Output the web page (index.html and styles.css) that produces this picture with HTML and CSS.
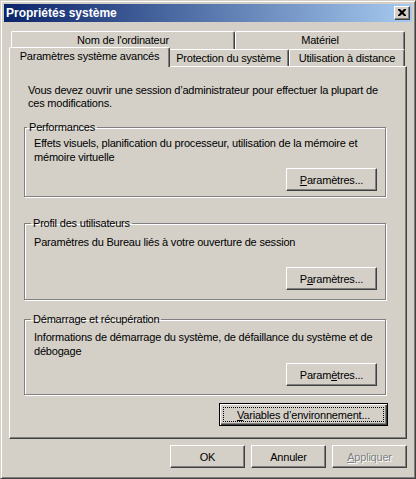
FILE: index.html
```html
<!DOCTYPE html>
<html lang="fr">
<head>
<meta charset="utf-8">
<title>Propriétés système</title>
<link rel="stylesheet" href="styles.css">
</head>
<body>
<div class="window">
  <div class="titlebar">
    <span class="title">Propriétés système</span>
    <span class="close-btn"><svg width="8" height="7" viewBox="0 0 8 7"><path d="M0 0h2l2 2 2-2h2v1L5.5 3.5 8 6v1H6L4 5 2 7H0V6l2.5-2.5L0 1z" fill="#000"/></svg></span>
  </div>
  <div class="client">
    <div class="tabs">
      <div class="tabrow tabrow-back">
        <div class="tab tab-nom">Nom de l'ordinateur</div>
        <div class="tab tab-mat">Matériel</div>
      </div>
      <div class="tabrow tabrow-front">
        <div class="tab tab-avc tab-selected">Paramètres système avancés</div>
        <div class="tab tab-prot">Protection du système</div>
        <div class="tab tab-util">Utilisation à distance</div>
      </div>
    </div>
    <div class="panel">
      <p class="intro">Vous devez ouvrir une session d’administrateur pour effectuer la plupart de<br>ces modifications.</p>

      <fieldset class="gb gb-perf">
        <legend>Performances</legend>
        <div class="gb-body">
          <p class="gb-text">Effets visuels, planification du processeur, utilisation de la mémoire et<br>mémoire virtuelle</p>
          <button class="btn btn-wide"><u>P</u>aramètres...</button>
        </div>
      </fieldset>

      <fieldset class="gb gb-prof">
        <legend>Profil des utilisateurs</legend>
        <div class="gb-body">
          <p class="gb-text">Paramètres du Bureau liés à votre ouverture de session</p>
          <button class="btn btn-wide">P<u>a</u>ramètres...</button>
        </div>
      </fieldset>

      <fieldset class="gb gb-dem">
        <legend>Démarrage et récupération</legend>
        <div class="gb-body">
          <p class="gb-text">Informations de démarrage du système, de défaillance du système et de<br>débogage</p>
          <button class="btn btn-wide">Param<u>è</u>tres...</button>
        </div>
      </fieldset>

      <div class="env-row">
        <button class="btn btn-default btn-env"><span class="focus-rect"></span><u>V</u>ariables d’environnement...</button>
      </div>
    </div>
    <div class="dlg-buttons">
      <button class="btn">OK</button>
      <button class="btn">Annuler</button>
      <button class="btn btn-disabled"><u>A</u>ppliquer</button>
    </div>
  </div>
</div>
</body>
</html>
```
FILE: styles.css
```css
* { box-sizing: border-box; }
html, body { margin: 0; padding: 0; }
body {
  background: #D4D0C8;
  font-family: "Liberation Sans", Arial, sans-serif;
  font-size: 11px;
  letter-spacing: -0.2px;
  color: #000;
}
.window {
  width: 416px;
  height: 479px;
  background: #D4D0C8;
  border: 1px solid;
  border-color: #D4D0C8 #404040 #404040 #D4D0C8;
  box-shadow: inset 1px 1px 0 #fff, inset -1px -1px 0 #808080;
  padding: 3px;
}
.titlebar {
  height: 18px;
  background: linear-gradient(to right, #0A246A, #A6CAF0);
  display: flex;
  align-items: center;
  justify-content: space-between;
  padding: 0 2px 0 2px;
}
.title {
  color: #fff;
  font-weight: bold;
  font-size: 12px;
  letter-spacing: 0;
  line-height: 14px;
}
.close-btn {
  width: 16px;
  height: 14px;
  background: #D4D0C8;
  border: 1px solid;
  border-color: #fff #404040 #404040 #fff;
  box-shadow: inset -1px -1px 0 #808080;
  display: flex;
  align-items: center;
  justify-content: center;
  padding: 0 1px 1px 0;
}
.close-btn svg { display: block; }

.client { padding: 0 5px 0 5px; }

.tabs { margin-top: 9px; width: 398px; position: relative; z-index: 1; }
.tabrow { display: flex; padding: 0 1px 0 2px; }
.tabrow-back { height: 18px; }
.tabrow-front { height: 17px; }
.tab {
  background: #D4D0C8;
  border-top: 1px solid #fff;
  border-left: 1px solid #fff;
  border-right: 1px solid #404040;
  box-shadow: inset -1px 0 0 #808080;
  border-radius: 2px 2px 0 0;
  text-align: center;
  line-height: 16px;
  white-space: nowrap;
  height: 100%;
}
.tabrow-back .tab { height: 19px; line-height: 17px; }
.tab-nom { width: 224px; }
.tab-mat { width: 170px; }
.tab-avc { width: 157px; }
.tab-prot { width: 121px; }
.tab-util { width: 116px; }
.tab-selected {
  position: relative;
  z-index: 2;
  margin: -2px -2px 0 -2px;
  width: 161px;
  height: 20px;
  line-height: 17px;
}
.tabrow-front .tab:not(.tab-selected) { padding-top: 1px; line-height: 15px; }

.panel {
  width: 398px;
  height: 373px;
  border: 1px solid;
  border-color: #fff #404040 #404040 #fff;
  box-shadow: inset -1px -1px 0 #808080;
  padding: 17px 0 0 14px;
}
.intro {
  margin: 0 0 0 4px;
  line-height: 13px;
}
.gb {
  margin: 0;
  padding: 0;
  width: 362px;
  border: 1px solid #808080;
  box-shadow: inset 1px 1px 0 #fff, 1px 1px 0 #fff;
  min-width: 0;
}
.gb legend {
  padding: 0 2px;
  line-height: 13px;
  margin-left: 6px;
}
.gb-perf legend { margin-left: 2px; }
.gb-body {
  display: flex;
  flex-direction: column;
  align-items: flex-start;
  padding: 1px 8px 5px 9px;
}
.gb-text { margin: 0; line-height: 14px; white-space: nowrap; }
.gb .btn-wide { margin-top: auto; align-self: flex-end; }

.gb-perf { margin-top: 11px; }
.gb-perf .gb-body { height: 62px; padding-top: 2px; }
.gb-prof { margin-top: 20px; }
.gb-prof .gb-body { height: 69px; padding-top: 5px; padding-bottom: 9px; }
.gb-dem { margin-top: 13px; }
.gb-dem .gb-body { height: 68px; padding-top: 4px; padding-bottom: 8px; }

.btn {
  width: 75px;
  height: 23px;
  padding: 0;
  font-family: "Liberation Sans", Arial, sans-serif;
  font-size: 11px;
  letter-spacing: -0.2px;
  color: #000;
  background: #D4D0C8;
  border: 1px solid;
  border-color: #fff #404040 #404040 #fff;
  box-shadow: inset -1px -1px 0 #808080;
  border-radius: 0;
  line-height: 20px;
  text-align: center;
}
.btn-wide { width: 91px; }
.btn-default {
  position: relative;
  border: 1px solid #000;
  box-shadow: inset 1px 1px 0 #fff, inset -1px -1px 0 #404040, inset -2px -2px 0 #808080;
}
.btn-env { width: 169px; }
.focus-rect {
  position: absolute;
  left: 3px; top: 3px; right: 3px; bottom: 3px;
  border: 1px dotted #000;
}
.env-row {
  display: flex;
  justify-content: flex-end;
  width: 364px;
  margin-top: 8px;
}
.btn-disabled {
  color: #808080;
  text-shadow: 1px 1px 0 #fff;
}
.dlg-buttons {
  display: flex;
  justify-content: flex-end;
  gap: 6px;
  margin-top: 6px;
}
```
